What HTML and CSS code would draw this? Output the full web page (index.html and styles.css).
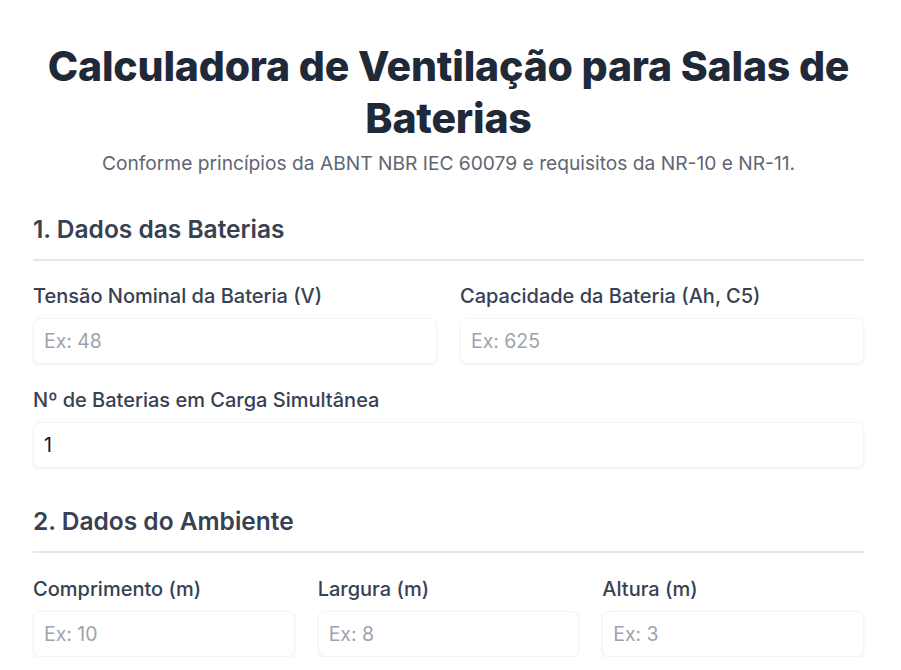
FILE: index.html
```html
<!DOCTYPE html>
<html lang="pt-BR">
<head>
<meta charset="utf-8">
<title>Calculadora de Ventilação para Salas de Baterias</title>
<link rel="stylesheet" href="styles.css">
</head>
<body>
<main class="page">
  <header class="hero">
    <h1 class="title">Calculadora de Ventilação para Salas de Baterias</h1>
    <p class="subtitle">Conforme princípios da ABNT NBR IEC 60079 e requisitos da NR-10 e NR-11.</p>
  </header>

  <section class="section">
    <h2 class="section-title">1. Dados das Baterias</h2>
    <div class="grid grid-2">
      <label class="field">
        <span class="label">Tensão Nominal da Bateria (V)</span>
        <input class="input" type="number" placeholder="Ex: 48">
      </label>
      <label class="field">
        <span class="label">Capacidade da Bateria (Ah, C5)</span>
        <input class="input" type="number" placeholder="Ex: 625">
      </label>
    </div>
    <label class="field field-full">
      <span class="label">Nº de Baterias em Carga Simultânea</span>
      <input class="input" type="number" value="1">
    </label>
  </section>

  <section class="section">
    <h2 class="section-title">2. Dados do Ambiente</h2>
    <div class="grid grid-3">
      <label class="field">
        <span class="label">Comprimento (m)</span>
        <input class="input" type="number" placeholder="Ex: 10">
      </label>
      <label class="field">
        <span class="label">Largura (m)</span>
        <input class="input" type="number" placeholder="Ex: 8">
      </label>
      <label class="field">
        <span class="label">Altura (m)</span>
        <input class="input" type="number" placeholder="Ex: 3">
      </label>
    </div>
  </section>
</main>
</body>
</html>
```

FILE: styles.css
```css
* { box-sizing: border-box; }
html, body { margin: 0; padding: 0; background: #ffffff; }
body {
  font-family: Inter, "Noto Sans", "Liberation Sans", sans-serif;
  color: #1f2937;
}
.page {
  width: 831px;
  margin-left: 33px;
  padding-top: 40px;
}
.hero { text-align: center; }
.title {
  margin: 0;
  font-size: 41px;
  line-height: 52px;
  font-weight: 800;
  color: #1f2937;
  letter-spacing: -0.2px;
}
.subtitle {
  margin: 6px 0 0;
  font-size: 19.2px;
  line-height: 26px;
  color: #5f6672;
}
.section { margin-top: 36px; }
.section-title {
  margin: 0;
  padding-bottom: 13px;
  font-size: 24.5px;
  line-height: 34px;
  font-weight: 600;
  color: #374151;
  border-bottom: 2px solid #e5e7eb;
}
.grid { display: grid; gap: 23px; margin-top: 22px; }
.grid-2 { grid-template-columns: 1fr 1fr; }
.grid-3 { grid-template-columns: 1fr 1fr 1fr; margin-top: 23px; }
.field { display: flex; flex-direction: column; }
.field-full { margin-top: 23px; }
.label {
  font-size: 20px;
  line-height: 26px;
  font-weight: 500;
  color: #374151;
  margin-bottom: 9px;
}
.input {
  height: 46px;
  width: 100%;
  border: 1px solid #f3f4f6;
  border-radius: 7px;
  box-shadow: 0 1px 3px rgba(0, 0, 0, 0.06);
  padding: 0 10px;
  font-family: inherit;
  font-size: 19.4px;
  color: #111827;
  background: #ffffff;
  outline: none;
  -moz-appearance: textfield;
}
.input::-webkit-outer-spin-button,
.input::-webkit-inner-spin-button { -webkit-appearance: none; margin: 0; }
.input::placeholder { color: #9ca3af; }
```
